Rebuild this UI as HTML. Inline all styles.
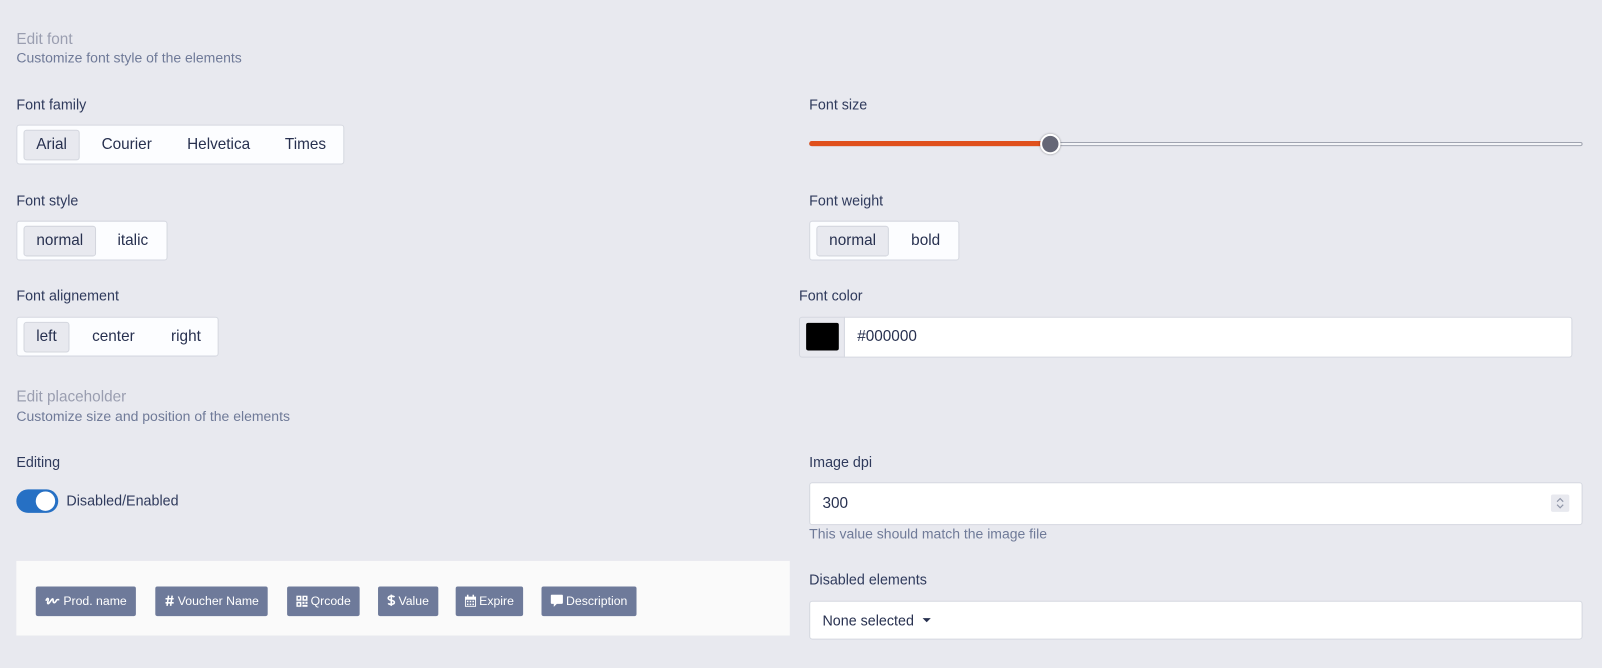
<!DOCTYPE html>
<html><head><meta charset="utf-8"><style>
*{box-sizing:border-box;margin:0;padding:0}
body{width:1602px;height:668px;background:#e8e9ef;font-family:"Liberation Sans",Arial,sans-serif;overflow:hidden;color:#27304f}
#w{position:absolute;left:0;top:0;width:1568px;height:654px;transform:scale(1.0217);transform-origin:0 0}
.a{position:absolute;white-space:nowrap}
.h{font-size:15px;color:#9a9eb0}
.sub{font-size:13.7px;color:#6f7a98}
.lbl{font-size:14px;color:#2f3a5c}
.grp{position:absolute;background:#fcfdff;border:1px solid #d5d8e0;border-radius:3px;height:39px}
.b{position:absolute;top:4px;height:30px;line-height:29px;font-size:15px;color:#27304f;text-align:center}
.b.on{background:#e8e9ef;border:1px solid #d3d6de;border-radius:3px;line-height:27px}
.inp{position:absolute;background:#fff;border:1px solid #d5d8e0;border-radius:3px;font-size:15px;color:#27304f}
.bd{position:absolute;top:574px;height:29px;line-height:28px;background:#6e7a9a;border-radius:2px;color:#fff;font-size:12px;padding:0 9px 0 9px}
.bd svg{vertical-align:-2px;margin-right:3px}
</style></head><body><div id="w">
<div class="a h" style="left:16px;top:30px">Edit font</div>
<div class="a sub" style="left:16px;top:49px">Customize font style of the elements</div>

<div class="a lbl" style="left:16px;top:94px">Font family</div>
<div class="grp" style="left:16px;top:122px;width:321px">
 <div class="b on" style="left:6px;width:55px">Arial</div>
 <div class="b" style="left:76px;width:62px">Courier</div>
 <div class="b" style="left:158px;width:78px">Helvetica</div>
 <div class="b" style="left:254px;width:56px">Times</div>
</div>

<div class="a lbl" style="left:792px;top:94px">Font size</div>
<div class="a" style="left:792px;top:139px;width:757px;height:4px;border:1px solid #a0a4b0;border-radius:2px;background:#f4f5f8"></div>
<div class="a" style="left:792px;top:138px;width:236px;height:5px;background:#e0501c;border-radius:3px"></div>
<div class="a" style="left:1018px;top:131px;width:20px;height:20px;border-radius:50%;background:#656776;border:2px solid #fff;box-shadow:0 0 2px rgba(0,0,0,.4)"></div>

<div class="a lbl" style="left:16px;top:188px">Font style</div>
<div class="grp" style="left:16px;top:216px;width:148px">
 <div class="b on" style="left:6px;width:71px">normal</div>
 <div class="b" style="left:88px;width:50px">italic</div>
</div>

<div class="a lbl" style="left:792px;top:188px">Font weight</div>
<div class="grp" style="left:792px;top:216px;width:147px">
 <div class="b on" style="left:6px;width:71px">normal</div>
 <div class="b" style="left:88px;width:50px">bold</div>
</div>

<div class="a lbl" style="left:16px;top:281px">Font alignement</div>
<div class="grp" style="left:16px;top:310px;width:198px">
 <div class="b on" style="left:6px;width:45px">left</div>
 <div class="b" style="left:64px;width:60px">center</div>
 <div class="b" style="left:140px;width:50px">right</div>
</div>

<div class="a lbl" style="left:782px;top:281px">Font color</div>
<div class="a" style="left:782px;top:310px;width:45px;height:40px;background:#e8e9ef;border:1px solid #d5d8e0;border-radius:3px 0 0 3px"></div>
<div class="a" style="left:789px;top:316px;width:32px;height:27px;background:#000;border-radius:2px"></div>
<div class="inp" style="left:826px;top:310px;width:713px;height:40px;line-height:38px;padding-left:12px;border-radius:0 3px 3px 0">#000000</div>

<div class="a h" style="left:16px;top:380px">Edit placeholder</div>
<div class="a sub" style="left:16px;top:400px">Customize size and position of the elements</div>

<div class="a lbl" style="left:16px;top:444px">Editing</div>
<div class="a" style="left:16px;top:479px;width:41px;height:23px;border-radius:12px;background:#2670c4"></div>
<div class="a" style="left:35px;top:481px;width:19px;height:19px;border-radius:50%;background:#fff"></div>
<div class="a lbl" style="left:65px;top:482px">Disabled/Enabled</div>

<div class="a lbl" style="left:792px;top:444px">Image dpi</div>
<div class="inp" style="left:792px;top:472px;width:757px;height:42px;line-height:40px;padding-left:12px">300</div>
<div class="a" style="left:1518px;top:484px;width:18px;height:17px;background:#e8e9ef;border-radius:2px"><svg width="18" height="17" viewBox="0 0 18 17"><path d="M6 7l3-3 3 3M6 10l3 3 3-3" stroke="#9096a8" stroke-width="1.2" fill="none"/></svg></div>
<div class="a sub" style="left:792px;top:515px">This value should match the image file</div>

<div class="a" style="left:16px;top:549px;width:757px;height:73px;background:#fafafa"></div>
<div class="bd" style="left:35px"><svg width="15" height="10" viewBox="0 0 15 10"><path d="M1 4c1-3 3-3 2 0s0 4 2 1 3-4 3-1 2 2 3 0 2-1 3-1" stroke="#fff" stroke-width="1.6" fill="none"/></svg>Prod. name</div>
<div class="bd" style="left:152px"><svg width="10" height="12" viewBox="0 0 10 12"><path d="M4 1L2.5 11M7.5 1L6 11M1 4h8M1 8h8" stroke="#fff" stroke-width="1.5" fill="none"/></svg>Voucher Name</div>
<div class="bd" style="left:281px"><svg width="11" height="11" viewBox="0 0 11 11" fill="#fff"><path d="M0 0h5v5H0zM1.5 1.5v2h2v-2zM6 0h5v5H6zM7.5 1.5v2h2v-2zM0 6h5v5H0zM1.5 7.5v2h2v-2zM6 6h2v2H6zM9 6h2v2H9zM6 9h5v2H6z"/></svg>Qrcode</div>
<div class="bd" style="left:370px"><svg width="8" height="13" viewBox="0 0 8 13"><path d="M7 3.5C6 2 1 2 1 4.5s6 1.5 6 4S2 11 1 9.5M4 1v11" stroke="#fff" stroke-width="1.6" fill="none"/></svg>Value</div>
<div class="bd" style="left:446px"><svg width="11" height="12" viewBox="0 0 11 12" fill="#fff"><path d="M0 2h11v10H0zM1 5v6h9V5z M2 0h1.5v3H2zM7.5 0H9v3H7.5z"/><path d="M2 6h1.5v1.5H2zM4.7 6h1.5v1.5H4.7zM7.4 6h1.5v1.5H7.4zM2 8.8h1.5v1.5H2zM4.7 8.8h1.5v1.5H4.7zM7.4 8.8h1.5v1.5H7.4z"/></svg>Expire</div>
<div class="bd" style="left:530px"><svg width="12" height="12" viewBox="0 0 12 12" fill="#fff"><path d="M1 0h10a1 1 0 011 1v7a1 1 0 01-1 1H6l-3 3V9H1a1 1 0 01-1-1V1a1 1 0 011-1z"/></svg>Description</div>

<div class="a lbl" style="left:792px;top:559px">Disabled elements</div>
<div class="inp" style="left:792px;top:588px;width:757px;height:38px;line-height:36px;padding-left:12px;font-size:14px">None selected <span style="display:inline-block;margin-left:5px;vertical-align:3px;border-left:4px solid transparent;border-right:4px solid transparent;border-top:4px solid #27304f"></span></div>
</div></body></html>
